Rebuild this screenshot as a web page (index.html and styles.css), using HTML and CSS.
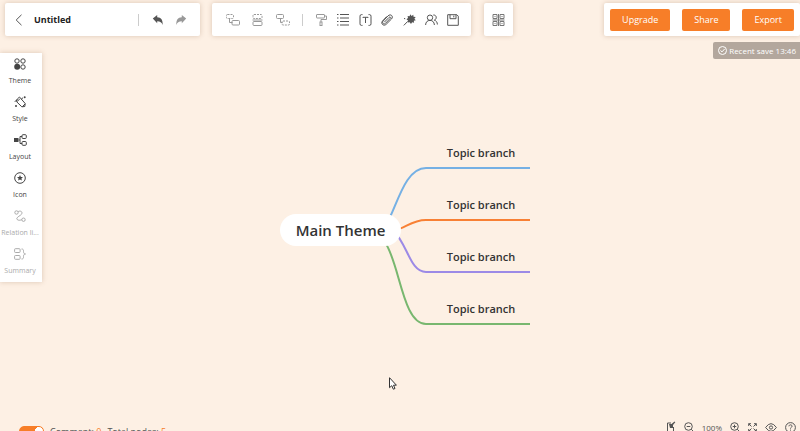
FILE: index.html
```html
<!DOCTYPE html>
<html lang="en">

<head>
    <meta charset="UTF-8">
    <meta name="viewport" content="width=device-width, initial-scale=1.0">
    <title>Untitled</title>
    <link rel="stylesheet" href="styles.css">
</head>

<body>
    <header>
        <div class="panel file-panel">
            <button class="back" aria-label="Back">
                <svg width="8" height="12" viewBox="0 0 8 12"><path d="M6.5 .8 1.2 6l5.3 5.2"/></svg>
            </button>
            <h1>Untitled</h1>
            <span class="divider"></span>
            <button class="history" aria-label="Undo">
                <svg width="12" height="12" viewBox="0 0 12 12"><path class="fill" d="M.8 4.6 5.2 1v2.2c4 .2 5.8 2.8 5.4 7.8-.8-2.6-2.4-3.8-5.4-3.8v2z"/></svg>
            </button>
            <button class="history faded" aria-label="Redo">
                <svg width="12" height="12" viewBox="0 0 12 12"><path class="fill" d="M11.2 4.6 6.8 1v2.2c-4 .2-5.8 2.8-5.4 7.8.8-2.6 2.4-3.8 5.4-3.8v2z"/></svg>
            </button>
        </div>

        <div class="panel tools">
            <button class="node-tool" aria-label="Add parent topic">
                <svg width="14" height="12" viewBox="0 0 14 12"><rect class="dash" x=".5" y=".5" width="7" height="4" rx="1"/><path d="M3.5 4.5v4h3"/><rect x="6" y="6.5" width="7.5" height="4.5" rx="1"/></svg>
            </button>
            <button class="node-tool" aria-label="Add topic">
                <svg width="11" height="12" viewBox="0 0 11 12"><rect class="dash" x="1" y=".5" width="9" height="4" rx="1"/><path d="M.5 6h10"/><rect x="1" y="7.5" width="9" height="4" rx="1"/></svg>
            </button>
            <button class="node-tool" aria-label="Add subtopic">
                <svg width="14" height="12" viewBox="0 0 14 12"><rect x=".5" y=".5" width="7" height="4" rx="1"/><path d="M4.5 4.5v4h2"/><rect class="dash" x="6" y="7" width="7.5" height="4" rx="1"/></svg>
            </button>
            <span class="divider"></span>
            <button class="faded" aria-label="Format painter">
                <svg width="11" height="12" viewBox="0 0 11 12"><rect x=".5" y=".5" width="8" height="3.5" rx=".5"/><path d="M8.5 2h2v3.500H5V8"/><rect x="4" y="8" width="2" height="3.5"/></svg>
            </button>
            <button aria-label="Outline">
                <svg width="12" height="12" viewBox="0 0 12 12"><path d="M0 .5h1.500M3 .5h9M0 4h1.500M3 4h9M0 7.500h1.500M3 7.500h9M0 11h1.500M3 11h9"/></svg>
            </button>
            <button aria-label="Text">
                <svg width="13" height="12" viewBox="0 0 13 12"><path d="M3.5.6H2.400Q1 .6 1 2.200v7.600q0 1.600 1.400 1.600h1.100M9.500.6h1.100Q12 .6 12 2.200v7.600q0 1.600-1.400 1.600H9.500M4 4V3.300h5V4M6.500 3.300V9"/></svg>
            </button>
            <button aria-label="Attachment">
                <svg width="12" height="12" viewBox="0 0 12 12"><path d="M3.300 8.200 8 3.400c1-1 2 .1 1.200 1L4.500 9.300C2.700 11 .6 9 2 7.200l5-5.300C9.700-.7 12.800 2.300 10.500 5L5.200 10.300C2.600 12.700-.6 9.700 1.500 7L5.700 2.500"/></svg>
            </button>
            <button aria-label="Magic wand">
                <svg width="13" height="12" viewBox="0 0 13 12"><path class="fill" d="m7.500.2 1 1.700L10.300.8l.2 2 2.200.3-1.300 1.600 1.400 1.500-2 .5.300 2-2-.5L8 10 6.700 8.200 4.800 8.500l.2-2-1.500-1.200 1.500-1.400L4.600 2l1.900.2z"/><path d="M4.800 7.300.8 11.400M1 4.500l1.200.2"/></svg>
            </button>
            <button aria-label="Collaborators">
                <svg width="13" height="12" viewBox="0 0 13 12"><circle cx="5" cy="3.700" r="2.700"/><path d="M.6 11c.1-3 1.800-4.600 4.400-4.600S9.200 8 9.400 11M8.300 1c3.400-.3 4 4 1 5.200 2 .5 3 2 3.100 4.300"/></svg>
            </button>
            <button aria-label="Save">
                <svg width="12" height="12" viewBox="0 0 12 12"><path d="M.7.7h9.100l1.500 1.500v9.100H.7zM3 .7v4h6v-4M6.800 1.600v1.800"/></svg>
            </button>
        </div>

        <div class="panel grid-panel">
            <button class="faded" aria-label="Templates">
                <svg width="13" height="12" viewBox="0 0 12 12"><path d="M.5.5h4v4h-4zM7.500.5h4v4h-4zM.5 7.500h4v4h-4zM7.500 7.500h4v4h-4zM6 0v12M0 6h12M2 2.500h1M9 2.500h1M2 9.500h1M9 9.500h1"/></svg>
            </button>
        </div>

        <div class="panel actions">
            <button>Upgrade</button>
            <button>Share</button>
            <button>Export</button>
        </div>
    </header>

    <main>
        <nav class="sidebar">
            <button>
                <svg width="12" height="12" viewBox="0 0 12 12"><circle cx="3" cy="3" r="2.200"/><circle cx="9" cy="3" r="2.200"/><circle class="fill" cx="3.200" cy="8.800" r="3"/><circle cx="9" cy="9" r="2.200"/></svg>
                Theme
            </button>
            <button>
                <svg width="13" height="12" viewBox="0 0 13 12"><path d="m3.300 3 2.200-2 5.700 6.500-.4 3-3 .3L2.200 5.300zM3 5.500 5.800 3M8.500 10.500 11 8"/><path d="M.8 5.800 3 3.500M7 3.500l2-1.800"/><circle class="fill" cx="10.700" cy="1.300" r="1"/><circle class="fill" cx="2" cy="10" r="1"/></svg>
                Style
            </button>
            <button>
                <svg width="13" height="12" viewBox="0 0 13 12"><rect class="fill" x="0" y="4" width="4.500" height="4"/><path d="M4.500 6H6M8 2.500H6v7h2"/><rect x="8" y=".7" width="4.300" height="3.800" rx="1"/><rect x="8" y="7.500" width="4.300" height="3.800" rx="1"/></svg>
                Layout
            </button>
            <button>
                <svg width="12" height="12" viewBox="0 0 12 12"><circle cx="6" cy="6" r="5.300"/><path class="fill" d="m6 3 .9 1.900 2.100.2-1.600 1.400.5 2.100L6 7.500 4.100 8.600l.5-2.100L3 5.100l2.100-.2z"/></svg>
                Icon
            </button>
            <button class="disabled" disabled>
                <svg width="12" height="12" viewBox="0 0 12 12"><circle cx="2.500" cy="2.500" r="1.700"/><circle cx="9.500" cy="9.700" r="1.700"/><path d="M4.200 1.500C8 0 9.200 3.300 6.500 5.200 3 7.300 1.500 9 4 10c1 .5 2.500.2 3.800-.3"/></svg>
                Relation li...
            </button>
            <button class="disabled" disabled>
                <svg width="12" height="12" viewBox="0 0 12 12"><rect x=".6" y=".7" width="5.500" height="3.800" rx=".8"/><rect x=".6" y="7.500" width="5.500" height="3.800" rx=".8"/><path d="M7.500 1c2 0 2 1 2 2.500S10 6 11.500 6C10 6 9.500 7 9.500 8.500s0 2.500-2 2.500"/></svg>
                Summary
            </button>
        </nav>

        <section class="mindmap">
            <svg class="lines" width="252" height="190" viewBox="0 0 252 190">
                <path stroke="#75b0e4" d="M105 86C116 72 123 28 146 28h104"/>
                <path stroke="#f88034" d="M115 90c10-1 16-10 31-10h104"/>
                <path stroke="#9c8ae6" d="M113 90c15 15 17 42 33 42h104"/>
                <path stroke="#78b76f" d="M106 104c14 22 17 80 40 80h104"/>
            </svg>
            <div class="root">Main Theme</div>
            <ul>
                <li>Topic branch</li>
                <li>Topic branch</li>
                <li>Topic branch</li>
                <li>Topic branch</li>
            </ul>
        </section>

        <svg class="cursor" width="8" height="13" viewBox="0 0 8 13"><path d="M.5.7v10l2.300-2 1.500 3.500 1.700-.7-1.500-3.300h2.900z"/></svg>

        <div class="saved">
            <svg width="9" height="9" viewBox="0 0 9 9"><circle cx="4.500" cy="4.500" r="4"/><path d="m2.500 4.500 1.500 1.400 2.600-2.900"/></svg>
            Recent save 13:46
        </div>
    </main>

    <footer>
        <div class="stats">
            <input type="checkbox" aria-label="Show statistics" checked>
            <span>Comment: <b>0</b></span>
            <span>Total nodes: <b>5</b></span>
        </div>
        <div class="view">
            <button aria-label="Navigator">
                <svg width="10" height="12" viewBox="0 0 10 12"><path d="M5 2H1.500v9h6V6"/><path class="fill" d="M3 3h2.500L8.500.5l.8.8L7 4v3H4z"/></svg>
            </button>
            <button aria-label="Zoom out">
                <svg width="10" height="10" viewBox="0 0 10 10"><circle cx="4.500" cy="4.500" r="3.800"/><path d="M2.700 4.500h3.600M7.200 7.200l2 2"/></svg>
            </button>
            <span>100%</span>
            <button aria-label="Zoom in">
                <svg width="10" height="10" viewBox="0 0 10 10"><circle cx="4.500" cy="4.500" r="3.800"/><path d="M2.700 4.500h3.600M4.500 2.700v3.600M7.200 7.200l2 2"/></svg>
            </button>
            <button aria-label="Fit to screen">
                <svg width="9" height="9" viewBox="0 0 9 9"><path d="M.7 3V.7H3M6 .7h2.300V3M8.300 6v2.300H6M3 8.300H.7V6M.7.7l2.800 2.800M8.300.7 5.500 3.500M8.300 8.300 5.500 5.500M.7 8.300l2.800-2.800"/></svg>
            </button>
            <button aria-label="Preview">
                <svg width="12" height="9" viewBox="0 0 12 9"><path d="M.6 4.500q5.400-7.700 10.800 0-5.400 7.700-10.800 0z"/><circle cx="6" cy="4.500" r="1.600"/></svg>
            </button>
            <button aria-label="Help">
                <svg width="11" height="11" viewBox="0 0 11 11"><circle cx="5.500" cy="5.500" r="4.900"/><path d="M3.900 4.300c.1-2 3.300-1.800 3.200 0C7 5.300 5.500 5.200 5.500 6.600M5.500 7.600v1"/></svg>
            </button>
        </div>
    </footer>
</body>

</html>
```
FILE: styles.css
```css
* {
    box-sizing: border-box;
}

body {
    display: flex;
    flex-direction: column;
    height: 100vh;
    margin: 0;
    overflow: hidden;
    background-color: #fdf0e4;
    font-family: "Open Sans", "Noto Sans", sans-serif;
    font-size: 8px;
    color: #333;
}

button {
    display: flex;
    align-items: center;
    justify-content: center;
    padding: 0;
    border: none;
    background: none;
    font: inherit;
    color: #555;
    white-space: nowrap;
    cursor: pointer;
}

svg {
    display: block;
    flex: none;
    fill: none;
    stroke: currentColor;
}

.fill {
    fill: currentColor;
    stroke: none;
}

.dash {
    stroke-dasharray: 2 1;
}

header {
    display: flex;
    padding: 3px 0 0 5px;
}

.panel {
    display: flex;
    align-items: center;
    height: 33px;
    background-color: #fff;
    border-radius: 2px;
    box-shadow: 0 0 5px rgba(120, 70, 40, 0.25);
}

.file-panel {
    width: 195px;
    padding: 0 8px;
    margin-right: 12px;
}

.back {
    width: 12px;
    height: 22px;
}

h1 {
    flex: 1;
    margin: 0 0 0 9px;
    font-size: 9px;
    font-weight: bold;
    color: #222;
}

.divider {
    width: 1px;
    height: 12px;
    margin: 0 7px;
    background-color: #ccc;
}

.history {
    width: 23px;
    height: 22px;
}

.tools {
    padding: 0 7px 0 8px;
    margin-right: 13px;
}

.tools button {
    width: 22px;
    height: 22px;
}

.tools .node-tool {
    width: 25px;
}

.node-tool,
.faded {
    color: #999;
}

.grid-panel {
    padding: 0 8px;
}

.grid-panel button {
    color: #777;
}

.actions {
    gap: 12px;
    padding: 0 6px;
    margin-left: auto;
}

.actions button {
    height: 22px;
    padding: 0 12px;
    border-radius: 2px;
    background-color: #f77e28;
    font-size: 9px;
    color: #fff;
}

main {
    position: relative;
    flex: 1;
    display: flex;
    align-items: flex-start;
    justify-content: space-between;
}

.sidebar {
    width: 42px;
    margin-top: 17px;
    padding-bottom: 1px;
    background-color: #fff;
    box-shadow: 0 0 5px rgba(120, 70, 40, 0.25);
}

.sidebar button {
    flex-direction: column;
    gap: 6px;
    width: 40px;
    height: 38px;
    font-size: 7px;
    line-height: 10px;
    color: #444;
}

.sidebar .disabled {
    color: #aaa;
}

.saved {
    display: flex;
    align-items: center;
    gap: 2px;
    height: 17px;
    margin-top: 6px;
    padding: 0 4px 0 5px;
    border-radius: 2px 0 0 2px;
    background-color: #b3a79d;
    color: #fff;
}

/* mind map canvas */
.mindmap {
    position: absolute;
    top: 104px;
    left: 35%;
    width: 252px;
    height: 190px;
}

.lines {
    position: absolute;
    top: 0;
    left: 0;
    stroke-width: 2;
}

.root {
    position: absolute;
    top: 74px;
    left: 0;
    width: 121px;
    border-radius: 16px;
    background-color: #fff;
    font-size: 15px;
    font-weight: 600;
    line-height: 32px;
    text-align: center;
}

.mindmap ul {
    position: absolute;
    top: 0;
    right: 2px;
    width: 98px;
    margin: 0;
    padding: 0;
    list-style: none;
    font-size: 11px;
    font-weight: 600;
    text-align: center;
}

.mindmap li {
    height: 52px;
    line-height: 26px;
}

.cursor {
    position: absolute;
    top: 341px;
    left: 389px;
    fill: #fff;
    stroke: #333;
}

footer {
    display: flex;
    justify-content: space-between;
    height: 10px;
    padding: 0 4px 0 19px;
    color: #555;
}

.stats,
.view {
    display: flex;
    align-items: center;
    height: 12px;
}

.stats {
    gap: 6px;
    height: 20px;
    font-size: 9px;
}

.stats b {
    font-weight: normal;
    color: #f77e28;
}

.stats input {
    appearance: none;
    width: 25px;
    height: 10px;
    margin: 0;
    border: 1px solid #f77e28;
    border-radius: 5px;
    background: radial-gradient(circle at 19px 4px, #fff 4px, #f77e28 4px);
}

.view {
    gap: 8px;
}
```
